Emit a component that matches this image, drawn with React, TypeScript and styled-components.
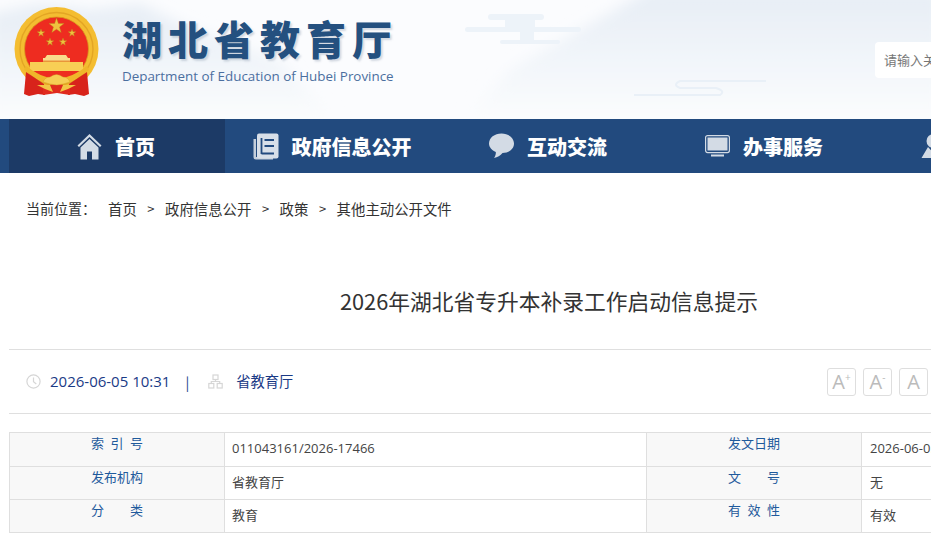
import styled, { createGlobalStyle } from "styled-components"

const GlobalStyle = createGlobalStyle`
    html, body {
        margin: 0;
        padding: 0;
        background: #fff;
        overflow: hidden;
    }
    body {
        font-family: "Noto Sans CJK SC", "Open Sans", sans-serif;
    }
`

const navItems = [
    { label: "首页", icon: <HomeIcon />, active: true },
    { label: "政府信息公开", icon: <DocIcon /> },
    { label: "互动交流", icon: <BubbleIcon /> },
    { label: "办事服务", icon: <MonitorIcon /> },
    { label: "数据发布", icon: <PersonIcon /> },
]

const crumbs = ["首页", "政府信息公开", "政策", "其他主动公开文件"]

const infoRows = [
    ["索引号", "011043161/2026-17466", "发文日期", "2026-06-05"],
    ["发布机构", "省教育厅", "文号", "无"],
    ["分类", "教育", "有效性", "有效"],
]

function HomeIcon() {
    return (
        <svg width="25" height="27" viewBox="0 0 25 27">
            <path d="M12.5 1 L0.5 12.5 L2 14 L12.5 4 L23 14 L24.5 12.5 Z" fill="#d3dbe5" />
            <path d="M12.5 6 L3.5 14.5 V26.5 H10 V18.5 H15 V26.5 H21.5 V14.5 Z" fill="#d3dbe5" />
        </svg>
    )
}

function DocIcon() {
    return (
        <svg width="26" height="27" viewBox="0 0 26 27">
            <path d="M0.5 6 H3 V24 H20 V26.5 H3 Q0.5 26.5 0.5 24 Z" fill="#c4cedb" />
            <rect x="4" y="0.5" width="21.5" height="25" rx="2" fill="#d8dfe8" />
            <path d="M8.5 5 V21 M11.5 7 H21 M11.5 13 H21 M8.5 20.5 H21" stroke="#224a7e" strokeWidth="1.8" fill="none" />
        </svg>
    )
}

function BubbleIcon() {
    return (
        <svg width="25" height="26" viewBox="0 0 25 26">
            <path d="M12.5 0.5 C19.5 0.5 25 4.8 25 10.5 C25 16 19.8 20 13.5 20 C11.5 22.5 8.5 24.5 5 25 C6.5 23 7 21 6.8 19 C2.8 17.3 0 14.2 0 10.5 C0 4.8 5.5 0.5 12.5 0.5 Z" fill="#d3dbe5" />
        </svg>
    )
}

function MonitorIcon() {
    return (
        <svg width="25" height="22" viewBox="0 0 25 22">
            <rect x="0.6" y="0.6" width="23.8" height="17" rx="2" fill="none" stroke="#d3dbe5" strokeWidth="1.2" />
            <rect x="2.5" y="2.5" width="20" height="13" fill="#d3dbe5" />
            <rect x="6" y="19.5" width="13" height="2" fill="#d3dbe5" />
        </svg>
    )
}

function PersonIcon() {
    return (
        <svg width="25" height="26" viewBox="0 0 25 26">
            <circle cx="12.5" cy="8" r="7" fill="#d3dbe5" />
            <path d="M0.5 25 L7 14 L12.5 20 L18 14 L24.5 25 Z" fill="#d3dbe5" />
        </svg>
    )
}

function ClockIcon() {
    return (
        <svg width="15" height="15" viewBox="0 0 15 15" fill="none" stroke="#d6d6d6" strokeWidth="1.2">
            <circle cx="7.5" cy="7.5" r="6.6" />
            <path d="M7.5 3.5 V7.8 L10.3 10" />
        </svg>
    )
}

function OrgIcon() {
    return (
        <svg width="15" height="15" viewBox="0 0 15 15" fill="none" stroke="#d6d6d6" strokeWidth="1.2">
            <rect x="5" y="1" width="5" height="4.5" />
            <rect x="0.8" y="9.5" width="5" height="4.5" />
            <rect x="9.2" y="9.5" width="5" height="4.5" />
            <path d="M7.5 5.5 V7.5 M3.3 9.5 V7.5 H11.7 V9.5" />
        </svg>
    )
}

function Star({ x, y, r }: { x: number; y: number; r: number }) {
    const points = Array.from({ length: 10 }, (_, i) => {
        const radius = i % 2 === 0 ? r : r * 0.4
        const angle = (Math.PI / 5) * i - Math.PI / 2
        return `${x + radius * Math.cos(angle)},${y + radius * Math.sin(angle)}`
    }).join(" ")
    return <polygon points={points} fill="#efc23e" stroke="#b9851c" strokeWidth="0.4" />
}

function Emblem() {
    return (
        <svg width="86" height="90" viewBox="0 0 86 90">
            <circle cx="42.5" cy="42" r="42" fill="#f4bd31" />
            <circle cx="42.5" cy="42" r="36.5" fill="none" stroke="#e3a524" strokeWidth="1.4" />
            <circle cx="42.5" cy="42" r="32" fill="#ee2c20" stroke="#d99a1f" strokeWidth="0.8" />
            <Star x={42.5} y={19} r={8} />
            <Star x={27} y={26} r={4} />
            <Star x={58} y={26} r={4} />
            <Star x={36} y={35} r={4} />
            <Star x={49} y={35} r={4} />
            <path d="M33 48 H52 L54 51 H56 V55 H29 V51 H31 Z" fill="#f9dc8c" />
            <rect x="29" y="53.5" width="27" height="1.5" fill="#e9963a" />
            <rect x="16" y="55" width="53" height="9" fill="#f8cf55" />
            <path d="M12 59 Q27 71 42.5 72 Q58 71 73 59 L75 63 Q58 77 42.5 77 Q27 77 10 63 Z" fill="#f0b62a" />
            <path d="M12 65 L24 73 L30 77 L31 88 L24 87 L15 89 L10 87 Z" fill="#d8231b" />
            <path d="M73 65 L61 73 L55 77 L54 88 L61 87 L70 89 L75 87 Z" fill="#d8231b" />
            <path d="M29 80 L43 76 L56 80 L56 88 L43 86 L29 88 Z" fill="#e02a1e" />
            <path d="M36 70 Q42.5 65 49 70 Q54 70 56 75 L49 77 Q43 79 36 77 L29 75 Q31 70 36 70 Z" fill="#f6cd55" stroke="#cf981f" strokeWidth="0.4" />
            <path d="M23 78 L36 78 L39 85 L31 82 Z M62 78 L49 78 L46 85 L54 82 Z" fill="#f3c545" />
        </svg>
    )
}

function Scenery() {
    return (
        <SceneryLayer viewBox="0 0 931 119" preserveAspectRatio="none">
            <defs>
                <filter id="soft">
                    <feGaussianBlur stdDeviation="7" />
                </filter>
                <linearGradient id="fade" x1="0" y1="0" x2="0" y2="1">
                    <stop offset="0" stopColor="#e6edf5" />
                    <stop offset="1" stopColor="#fcfdfe" />
                </linearGradient>
            </defs>
            <path d="M-10 14 L40 4 L90 10 L140 4 L190 28 L280 60 L340 125 L-10 125 Z" fill="url(#fade)" filter="url(#soft)" />
            <path d="M460 125 L510 70 L590 24 L650 -10 L941 -10 V125 Z" fill="url(#fade)" filter="url(#soft)" />
            <g fill="#edf3f9">
                <rect x="488" y="14" width="56" height="6" rx="3" />
                <rect x="465" y="27" width="116" height="5" rx="2.5" />
                <rect x="500" y="40" width="60" height="4" rx="2" />
                <rect x="505" y="20" width="30" height="7" />
                <rect x="520" y="32" width="14" height="8" />
            </g>
            <path d="M766 81 H680 Q672 85 680 88 H716 Q726 91 720 95 H634" stroke="#e9f0f7" strokeWidth="2" fill="none" />
        </SceneryLayer>
    )
}

const App = () => {
    return (
        <Page>
            <GlobalStyle />
            <Header>
                <Scenery />
                <HeaderInner>
                    <LogoBox>
                        <Emblem />
                    </LogoBox>
                    <Brand>
                        <BrandTitle>湖北省教育厅</BrandTitle>
                        <BrandSub>Department of Education of Hubei Province</BrandSub>
                    </Brand>
                    <SearchBox>请输入关键词</SearchBox>
                </HeaderInner>
            </Header>
            <Nav>
                <NavInner>
                    {navItems.map((item) => (
                        <NavItem key={item.label} $active={item.active}>
                            {item.icon}
                            <span>{item.label}</span>
                        </NavItem>
                    ))}
                </NavInner>
            </Nav>
            <Main>
                <Breadcrumb>
                    <CrumbLead>当前位置：</CrumbLead>
                    {crumbs.map((crumb, i) => (
                        <Crumb key={crumb}>
                            {i > 0 && <CrumbArrow>&gt;</CrumbArrow>}
                            {crumb}
                        </Crumb>
                    ))}
                </Breadcrumb>
                <ArticleTitle>2026年湖北省专升本补录工作启动信息提示</ArticleTitle>
                <MetaBar>
                    <ClockIcon />
                    <MetaDate>2026-06-05 10:31</MetaDate>
                    <MetaSplit>|</MetaSplit>
                    <OrgIcon />
                    <MetaOrg>省教育厅</MetaOrg>
                    <FontTools>
                        <FontButton>A<sup>+</sup></FontButton>
                        <FontButton>A<sup>-</sup></FontButton>
                        <FontButton>A</FontButton>
                    </FontTools>
                </MetaBar>
                <InfoTable>
                    <colgroup>
                        <col width="215" />
                        <col width="422" />
                        <col width="215" />
                        <col width="228" />
                    </colgroup>
                    <tbody>
                        {infoRows.map((row) => (
                            <tr key={row[0]}>
                                <LabelCell><LabelText>{row[0]}</LabelText></LabelCell>
                                <ValueCell>{row[1]}</ValueCell>
                                <LabelCell><LabelText>{row[2]}</LabelText></LabelCell>
                                <ValueCell>{row[3]}</ValueCell>
                            </tr>
                        ))}
                    </tbody>
                </InfoTable>
            </Main>
        </Page>
    )
}

const Page = styled.div`
    width: 931px;
    height: 540px;
    overflow: hidden;
`

const Header = styled.header`
    position: relative;
    height: 119px;
    background: #fbfcfe;
`

const SceneryLayer = styled.svg`
    position: absolute;
    inset: 0;
    width: 100%;
    height: 100%;
`

const HeaderInner = styled.div`
    position: relative;
    width: 1080px;
    height: 119px;
    margin-left: 9px;
    display: flex;
    align-items: flex-start;
`

const LogoBox = styled.div`
    width: 113px;
    padding: 7px 0 0 5px;
    box-sizing: border-box;
    flex: none;
`

const Brand = styled.div`
    padding-top: 12px;
    width: 300px;
`

const BrandTitle = styled.div`
    font-size: 40px;
    line-height: 52px;
    font-weight: 900;
    letter-spacing: 6px;
    color: #24507f;
    text-shadow: 2px 2px 2px rgba(90, 110, 140, 0.25);
    white-space: nowrap;
`

const BrandSub = styled.div`
    margin-top: 2px;
    font-family: "Open Sans", sans-serif;
    font-size: 13.4px;
    line-height: 20px;
    color: #4b6f9f;
    white-space: nowrap;
`

const SearchBox = styled.div`
    margin: 42px 0 0 auto;
    width: 214px;
    height: 36px;
    padding-left: 9px;
    box-sizing: border-box;
    background: #fff;
    border-radius: 4px;
    font-size: 13px;
    line-height: 35px;
    color: #777;
`

const Nav = styled.nav`
    height: 54px;
    background: #224a7e;
`

const NavInner = styled.div`
    margin-left: 9px;
    width: 1080px;
    display: flex;
`

const NavItem = styled.div<{ $active?: boolean }>`
    width: 216px;
    height: 54px;
    padding-right: 2px;
    box-sizing: border-box;
    flex: none;
    display: flex;
    align-items: center;
    justify-content: center;
    gap: 13px;
    background: ${(p) => (p.$active ? "#1c3a66" : "transparent")};
    color: #fff;
    font-size: 20px;
    font-weight: 900;
    white-space: nowrap;
`

const Main = styled.main`
    margin-left: 9px;
    width: 1080px;
`

const Breadcrumb = styled.div`
    height: 70px;
    padding-left: 17px;
    display: flex;
    align-items: center;
    color: #333;
    white-space: nowrap;
`

const CrumbLead = styled.span`
    width: 82px;
    flex: none;
    font-size: 14px;
`

const Crumb = styled.span`
    display: flex;
    align-items: center;
    font-size: 14.4px;
`

const CrumbArrow = styled.span`
    margin: 0 10.5px;
    font-size: 13px;
`

const ArticleTitle = styled.h1`
    margin: 0;
    height: 107px;
    padding-top: 40px;
    box-sizing: border-box;
    border-bottom: 1px solid #dfdfdf;
    font-size: 21.75px;
    line-height: 36px;
    font-weight: 400;
    text-align: center;
    color: #333;
`

const MetaBar = styled.div`
    height: 64px;
    padding-left: 17px;
    box-sizing: border-box;
    border-bottom: 1px solid #dfdfdf;
    display: flex;
    align-items: center;
    color: #1a3a86;
    font-size: 14px;
    white-space: nowrap;
`

const MetaDate = styled.span`
    margin: -2px 0 0 9px;
    font-family: "Open Sans", sans-serif;
    font-size: 15px;
`

const MetaSplit = styled.span`
    margin: 0 19px 0 15px;
`

const MetaOrg = styled.span`
    margin: -2px 0 0 13px;
    font-size: 14.3px;
`

const FontTools = styled.div`
    margin: 0 161px 0 auto;
    display: flex;
    gap: 7px;
`

const FontButton = styled.div`
    width: 29px;
    height: 28px;
    box-sizing: border-box;
    border: 1px solid #dedede;
    border-radius: 3px;
    display: flex;
    align-items: center;
    justify-content: center;
    font-family: "Open Sans", sans-serif;
    font-size: 20px;
    color: #bbb;

    sup {
        font-size: 10px;
        line-height: 1;
        align-self: flex-start;
        margin-top: 3px;
    }
`

const InfoTable = styled.table`
    margin-top: 18px;
    width: 1080px;
    table-layout: fixed;
    border-collapse: collapse;
    font-size: 13px;

    tr:first-child td {
        height: 34px;
    }

    td:last-child {
        padding-left: 8px;
    }
`

const LabelCell = styled.td`
    height: 33px;
    padding: 0;
    box-sizing: border-box;
    vertical-align: top;
    background: #f8f8f8;
    border: 1px solid #dfdfdf;
    color: #1f5a9c;
    line-height: 20px;
`

const LabelText = styled.span`
    display: block;
    width: 52px;
    margin: 0 auto;
    text-align: justify;
    text-align-last: justify;
`

const ValueCell = styled.td`
    padding: 5px 0 0 7px;
    box-sizing: border-box;
    vertical-align: top;
    border: 1px solid #dfdfdf;
    font-family: "Open Sans", "Noto Sans CJK SC", sans-serif;
    color: #444;
    line-height: 20px;
    white-space: nowrap;
`

export default App
